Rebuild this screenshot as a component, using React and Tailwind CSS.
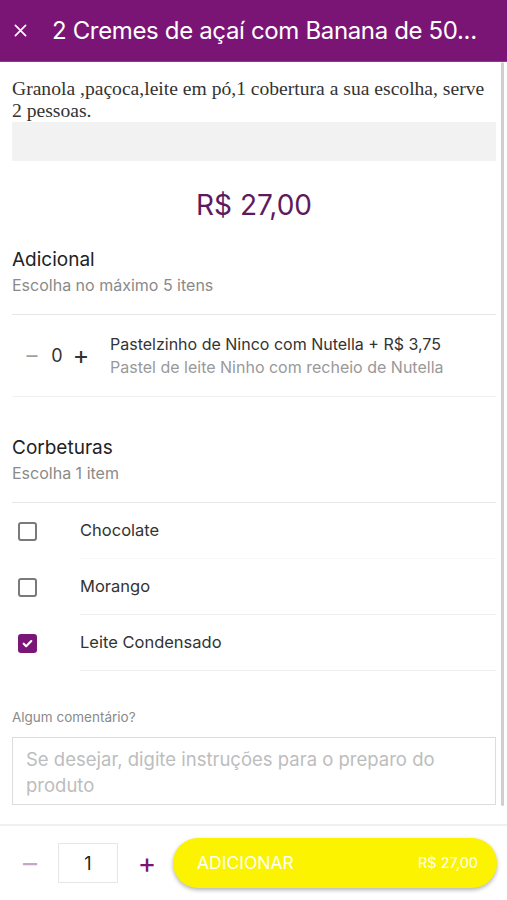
import React from "react";

const font = { fontFamily: "Inter, 'Noto Sans', sans-serif" };

function Checkbox({ checked }) {
  if (checked) {
    return (
      <div className="w-[19px] h-[19px] rounded-[3px] bg-[#7a1677] flex items-center justify-center">
        <svg width="13" height="13" viewBox="0 0 24 24" fill="none" stroke="white" strokeWidth="4" strokeLinecap="round" strokeLinejoin="round">
          <path d="M5 12.5l4.5 4.5L19 7.5" />
        </svg>
      </div>
    );
  }
  return <div className="w-[19px] h-[19px] rounded-[3px] border-2 border-[#7a7a7a] bg-white" />;
}

function OptionRow({ label, checked, line }) {
  return (
    <div className="flex items-stretch h-[56px]">
      <div className="w-[68px] flex items-center pl-[6px]">
        <Checkbox checked={checked} />
      </div>
      <div className={`flex-1 flex items-center text-[16.5px] text-[#333] ${line}`}>{label}</div>
    </div>
  );
}

export default function App() {
  return (
    <div className="w-[507px] h-[900px] bg-white flex flex-col overflow-hidden" style={font}>
      <header className="h-[62px] bg-[#7a1576] flex items-center border-b border-[#8e3a8b] shrink-0">
        <span className="w-[52px] pl-[14px] flex items-center">
          <svg width="13" height="13" viewBox="0 0 14 14" stroke="white" strokeWidth="1.8" strokeLinecap="round">
            <path d="M1.5 1.5l11 11M12.5 1.5l-11 11" />
          </svg>
        </span>
        <span className="text-white text-[24px] tracking-[-0.35px] whitespace-nowrap">2 Cremes de açaí com Banana de 50...</span>
      </header>

      <div className="flex flex-1 min-h-0">
        <main className="flex-1 pl-3 flex flex-col">
          <p className="mt-[16px] text-[19.6px] leading-[22px] text-[#333]" style={{ fontFamily: "'Liberation Serif', 'Times New Roman', serif" }}>
            Granola ,paçoca,leite em pó,1 cobertura a sua escolha, serve 2 pessoas.
          </p>
          <div className="mt-0 h-[39px] bg-[#f2f2f2]" />
          <div className="mt-[27px] text-center text-[28px] leading-[34px] text-[#5e1a5e]">R$ 27,00</div>

          <div className="mt-[26px] text-[19px] leading-[24px] text-[#222]">Adicional</div>
          <div className="mt-[3px] text-[16px] leading-[20px] text-[#8a8a8a]">Escolha no máximo 5 itens</div>
          <div className="mt-[19px] h-[1px] bg-[#e6e6e6]" />

          <div className="flex items-center h-[81px]">
            <div className="flex items-center w-[98px] pl-[8px]">
              <span className="text-[22px] text-[#a0a0a0] w-[24px] text-center">–</span>
              <span className="text-[18px] text-[#333] w-[26px] text-center">0</span>
              <span className="text-[25px] text-[#333] w-[22px] text-center leading-none">+</span>
            </div>
            <div className="flex flex-col">
              <span className="text-[16px] leading-[23px] text-[#333]">Pastelzinho de Ninco com Nutella + R$ 3,75</span>
              <span className="text-[16px] leading-[23px] text-[#999]">Pastel de leite Ninho com recheio de Nutella</span>
            </div>
          </div>
          <div className="h-[1px] bg-[#f0f0f0]" />

          <div className="mt-[39px] text-[19px] leading-[24px] text-[#222]">Corbeturas</div>
          <div className="mt-[3px] text-[16px] leading-[20px] text-[#8a8a8a]">Escolha 1 item</div>
          <div className="mt-[19px] h-[1px] bg-[#e6e6e6]" />

          <OptionRow label="Chocolate" line="border-b border-[#f7f7f7]" />
          <OptionRow label="Morango" line="border-b border-[#eeeeee]" />
          <OptionRow label="Leite Condensado" checked line="border-b border-[#eeeeee]" />

          <div className="mt-[38px] text-[13.5px] leading-[16px] text-[#8a8a8a]">Algum comentário?</div>
          <div className="mt-[12px] h-[68px] border border-[#dcdcdc] px-[13px] pt-[8px] text-[18.5px] leading-[26px] text-[#bdbdbd]">
            Se desejar, digite instruções para o preparo do produto
          </div>
        </main>
        <div className="w-[11px] flex">
          <div className="ml-[5px] w-[3px] h-[744px] bg-[#cfcfcf] rounded-full" />
        </div>
      </div>

      <footer className="h-[76px] shrink-0 border-t-2 border-[#f0f0f0] flex items-center pl-[17px] pr-[10px]">
        <span className="w-[26px] text-center text-[28px] text-[#c9a3c8] leading-none">–</span>
        <div className="ml-[15px] w-[60px] h-[40px] border border-[#e6e6e6] flex items-center justify-center text-[18px] text-[#222]">1</div>
        <span className="ml-[17px] w-[24px] text-center text-[28px] text-[#7a1576] leading-none">+</span>
        <button className="ml-[14px] flex-1 h-[50px] rounded-full bg-[#fbf300] shadow-[0_2px_4px_rgba(0,0,0,0.3)] flex items-center justify-between pl-[24px] pr-[19px] text-white">
          <span className="text-[17.5px]">ADICIONAR</span>
          <span className="text-[14.5px]">R$ 27,00</span>
        </button>
      </footer>
    </div>
  );
}
